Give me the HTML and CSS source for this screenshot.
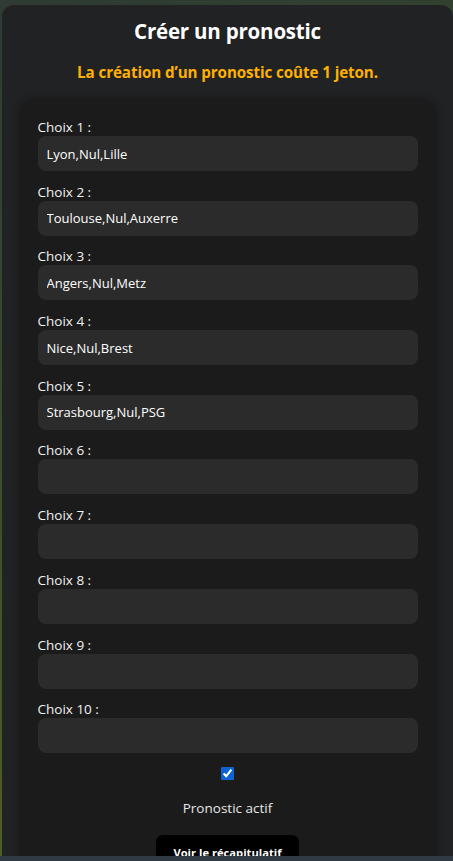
FILE: index.html
```html
<!DOCTYPE html>
<html lang="fr">
<head>
<meta charset="utf-8">
<title>Créer un pronostic</title>
<link rel="stylesheet" href="styles.css">
</head>
<body>
<main class="page">
  <h1 class="title">Créer un pronostic</h1>
  <p class="cost">La création d’un pronostic coûte 1 jeton.</p>
  <form class="form-card">
    <div class="field"><label>Choix 1 :</label><input type="text" value="Lyon,Nul,Lille"></div>
    <div class="field"><label>Choix 2 :</label><input type="text" value="Toulouse,Nul,Auxerre"></div>
    <div class="field"><label>Choix 3 :</label><input type="text" value="Angers,Nul,Metz"></div>
    <div class="field"><label>Choix 4 :</label><input type="text" value="Nice,Nul,Brest"></div>
    <div class="field"><label>Choix 5 :</label><input type="text" value="Strasbourg,Nul,PSG"></div>
    <div class="field"><label>Choix 6 :</label><input type="text" value=""></div>
    <div class="field"><label>Choix 7 :</label><input type="text" value=""></div>
    <div class="field"><label>Choix 8 :</label><input type="text" value=""></div>
    <div class="field"><label>Choix 9 :</label><input type="text" value=""></div>
    <div class="field"><label>Choix 10 :</label><input type="text" value=""></div>
    <div class="active">
      <input type="checkbox" checked>
      <span class="active-label">Pronostic actif</span>
    </div>
    <button type="button" class="recap">Voir le récapitulatif</button>
  </form>
</main>
<div class="bottom-strip"></div>
</body>
</html>
```
FILE: styles.css
```css
html, body {
  margin: 0;
  padding: 0;
  height: 100%;
  overflow: hidden;
}
body {
  background: linear-gradient(160deg, #2e3a33 0%, #3a4a2c 40%, #55681f 100%);
  font-family: "Open Sans", "Noto Sans", sans-serif;
  color: #fff;
}
.page {
  margin: 5px 0 0 2px;
  background: #212224;
  border-radius: 12px 12px 0 0;
  min-height: 900px;
  display: flex;
  flex-direction: column;
  align-items: center;
}
.title {
  margin: 14px 0 0;
  font-size: 20.5px;
  line-height: 24px;
  font-weight: 700;
  letter-spacing: -0.2px;
}
.cost {
  margin: 20px 0 0;
  font-size: 15.2px;
  line-height: 18px;
  font-weight: 700;
  color: #ffb000;
  letter-spacing: -0.1px;
}
.form-card {
  margin: 18px 0 0;
  width: 416px;
  box-sizing: border-box;
  padding: 19px 18px 20px;
  background: #1b1b1b;
  border-radius: 16px;
  box-shadow: 0 0 10px rgba(0,0,0,0.35);
  display: flex;
  flex-direction: column;
}
.field {
  display: flex;
  flex-direction: column;
  margin-bottom: 11.7px;
}
.field label {
  font-size: 13.5px;
  line-height: 18px;
  color: #f2f2f2;
}
.field input {
  height: 35px;
  box-sizing: border-box;
  border: none;
  outline: none;
  border-radius: 8px;
  background: #2b2b2b;
  color: #fff;
  font-family: inherit;
  font-size: 13px;
  padding: 0 9px;
}
.active {
  display: flex;
  flex-direction: column;
  align-items: center;
  margin-top: 2px;
}
.active input {
  width: 13px;
  height: 13px;
  margin: 0;
  accent-color: #0b63d6;
}
.active-label {
  margin-top: 19px;
  font-size: 13.5px;
  line-height: 18px;
  color: #e6e6e6;
}
.recap {
  align-self: center;
  margin-top: 18px;
  background: #000;
  color: #fff;
  border: none;
  border-radius: 7px;
  font-family: inherit;
  font-weight: 700;
  font-size: 11.2px;
  padding: 10px 17px;
}
.bottom-strip {
  position: fixed;
  left: 0;
  right: 0;
  bottom: 0;
  height: 5px;
  background: #2f3a44;
}
```
